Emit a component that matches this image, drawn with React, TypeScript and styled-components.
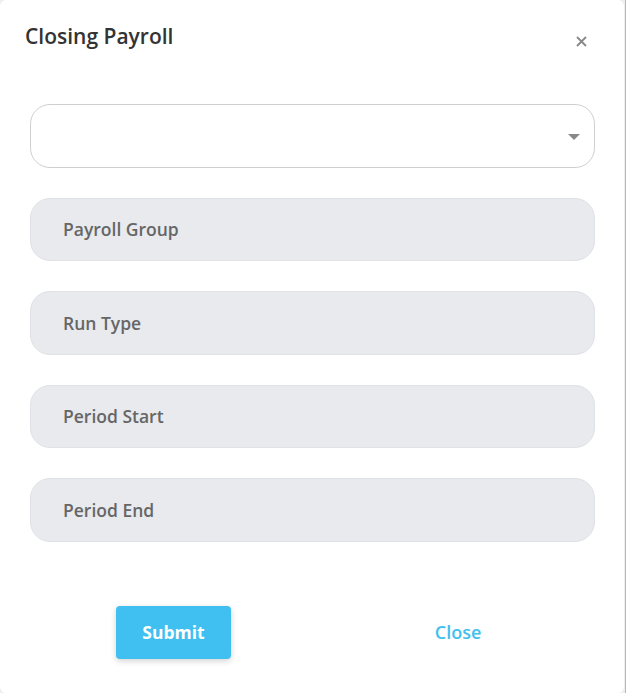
import React from "react";
import styled, { createGlobalStyle } from "styled-components";

const Global = createGlobalStyle`
  html, body { margin: 0; padding: 0; background: #f2f2f2; }
  body { font-family: "Open Sans", "Noto Sans", sans-serif; }
  * { box-sizing: border-box; }
`;

const Page = styled.div`
  width: 626px;
  height: 693px;
  display: flex;
  background: #eeeeee;
  border-right: 1px solid #b8b8b8;
`;

const Modal = styled.div`
  width: 624px;
  height: 693px;
  background: #ffffff;
  border-radius: 6px;
  display: flex;
  flex-direction: column;
  padding: 0 29px 0 30px;
`;

const Header = styled.div`
  display: flex;
  align-items: center;
  justify-content: space-between;
  height: 76px;
  margin-left: -5px;
`;

const Title = styled.h2`
  margin: 0;
  font-size: 21px;
  font-weight: 600;
  color: #333333;
  margin-top: -5px;
`;

const CloseX = styled.button`
  border: none;
  background: none;
  padding: 0;
  margin-right: 7px;
  margin-top: 6px;
  width: 14px;
  height: 14px;
  cursor: pointer;
  display: flex;
  align-items: center;
  justify-content: center;
`;

const Fields = styled.div`
  display: flex;
  flex-direction: column;
  gap: 30px;
  margin-top: 28px;
`;

const Select = styled.div`
  height: 63.5px;
  border: 1px solid #cfcfcf;
  border-radius: 20px;
  background: #fff;
  display: flex;
  align-items: center;
  justify-content: flex-end;
  padding-right: 14px;
`;

const Caret = styled.span`
  width: 0;
  height: 0;
  border-left: 6px solid transparent;
  border-right: 6px solid transparent;
  border-top: 6px solid #888888;
  margin-top: 2px;
`;

const Field = styled.div`
  height: 63.5px;
  border: 1px solid #dfe2e6;
  border-radius: 20px;
  background: #e8eaed;
  display: flex;
  align-items: center;
  padding-left: 32px;
  font-size: 17.5px;
  font-weight: 600;
  color: #666666;
`;

const Actions = styled.div`
  display: grid;
  grid-template-columns: 1fr 1fr;
  align-items: center;
  justify-items: center;
  margin-top: 64px;
  margin-right: -5px;
`;

const Submit = styled.button`
  width: 115px;
  height: 53px;
  border: none;
  border-radius: 4px;
  background: #3fc0f0;
  color: #ffffff;
  font-family: inherit;
  font-size: 17.5px;
  font-weight: 700;
  box-shadow: 0 2px 6px rgba(0, 0, 0, 0.18);
  cursor: pointer;
  margin-left: 2px;
`;

const TextButton = styled.button`
  border: none;
  background: none;
  color: #3fc0f0;
  font-family: inherit;
  font-size: 18px;
  font-weight: 600;
  cursor: pointer;
  margin-left: 1px;
`;

export default function App() {
  const fields = ["Payroll Group", "Run Type", "Period Start", "Period End"];
  return (
    <>
      <Global />
      <Page>
        <Modal>
          <Header>
            <Title>Closing Payroll</Title>
            <CloseX aria-label="close">
              <svg width="11" height="11" viewBox="0 0 11 11">
                <path d="M1 1 L10 10 M10 1 L1 10" stroke="#888" strokeWidth="1.8" />
              </svg>
            </CloseX>
          </Header>
          <Fields>
            <Select>
              <Caret />
            </Select>
            {fields.map((f) => (
              <Field key={f}>{f}</Field>
            ))}
          </Fields>
          <Actions>
            <Submit>Submit</Submit>
            <TextButton>Close</TextButton>
          </Actions>
        </Modal>
      </Page>
    </>
  );
}
